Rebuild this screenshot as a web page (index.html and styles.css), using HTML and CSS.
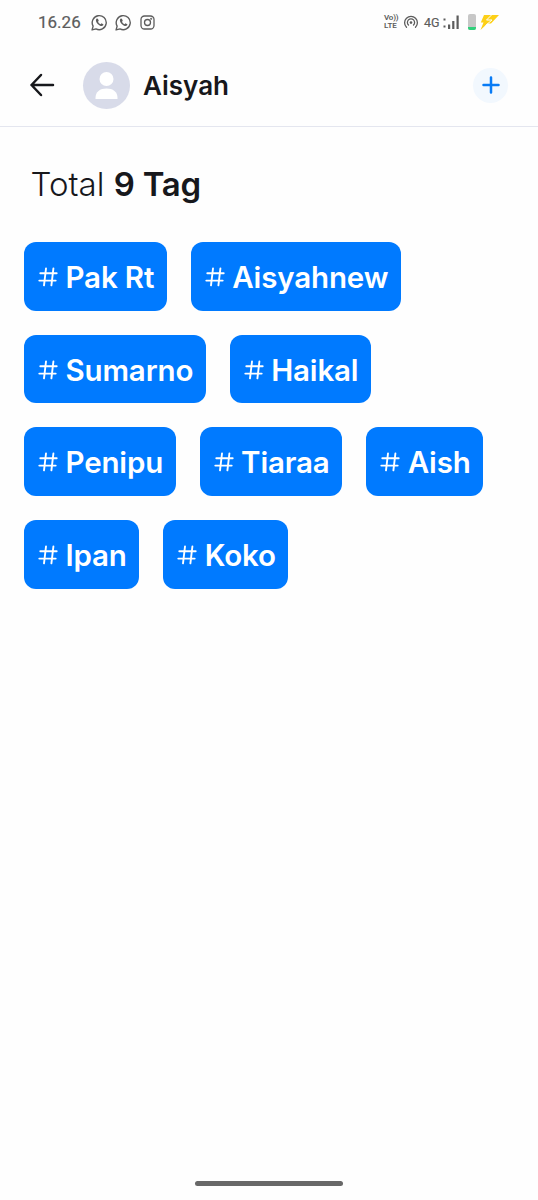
FILE: index.html
```html
<!DOCTYPE html>
<html lang="id">
<head>
    <meta charset="UTF-8">
    <meta name="viewport" content="width=device-width, initial-scale=1.0">
    <title>Aisyah - Tag</title>
    <link rel="stylesheet" href="styles.css">
</head>
<body>
    <svg class="sprite" width="0" height="0">
        <symbol id="icon-whatsapp" viewBox="0 0 16 16">
            <path d="M1 15l1-3.6A6.6 6.6 0 1 1 4.7 14z" fill="none" stroke="currentColor" stroke-width="1.3" stroke-linejoin="round"/>
            <path d="M5.2 4.5c-1.2 1-.6 3 1.1 4.8s4 2.6 5.1 1.4c.5-.7.3-1.1-.3-1.4l-1.2-.5-.9.8c-1.2-.5-1.9-1.2-2.4-2.3l.7-.9-.6-1.5c-.3-.6-.9-.8-1.500-.4z" fill="currentColor"/>
        </symbol>
        <symbol id="icon-hash" viewBox="0 0 20 20">
            <path d="M8 1.500L6 18.300M15.400 1.500L13.400 18.300M2.300 6.200h16.400M1.300 13.600h16.400" fill="none" stroke="currentColor" stroke-width="1.9" stroke-linecap="round"/>
        </symbol>
    </svg>

    <div class="status-bar">
        <div class="status-left">
            <span class="clock">16.26</span>
            <svg width="17" height="17"><use href="#icon-whatsapp"/></svg>
            <svg width="17" height="17"><use href="#icon-whatsapp"/></svg>
            <svg width="15" height="15" viewBox="0 0 15 15" fill="none" stroke="currentColor" stroke-width="1.3">
                <rect x="1" y="1" width="13" height="13" rx="3.5"/>
                <circle cx="7.5" cy="7.5" r="3"/>
                <circle cx="11.2" cy="3.8" r=".4"/>
            </svg>
        </div>
        <div class="status-right">
            <div class="volte"><span class="vo">Vo))</span><span>LTE</span></div>
            <svg class="hotspot" width="16" height="16" viewBox="0 0 16 16" fill="none" stroke="currentColor" stroke-width="1.3" stroke-linecap="round">
                <path d="M3.5 13.3a6.4 6.4 0 1 1 9 0M5.500 11a3.600 3.600 0 1 1 5 0"/>
                <circle cx="8" cy="8.6" r="1.3" fill="currentColor" stroke="none"/>
            </svg>
            <span class="network">4G</span>
            <svg class="signal" width="17" height="16" viewBox="0 0 17 16" fill="currentColor">
                <path d="M.5 4.500h2v2h-2zM.5 11.500h2v2h-2zM5 10.500h2.200V15H5zM9.200 7h2.200v8H9.200zM13.500 1.500h2.200V15h-2.200z"/>
            </svg>
            <div class="battery"><div class="battery-level"></div></div>
            <svg class="bolt" width="19" height="15" viewBox="0 0 19 15">
                <path d="M4 0h15l-8 8.500H7.500L.5 15 3.500 7.500H.8z" fill="#fdd017"/>
                <path d="M11.500 0L6.500 5H12L5.500 10.500" fill="none" stroke="#fefefe" stroke-width="1"/>
            </svg>
        </div>
    </div>

    <header>
        <button class="back-btn" aria-label="Kembali">
            <svg width="26" height="24" viewBox="0 0 26 24" fill="none" stroke="#17181c" stroke-width="2.5" stroke-linecap="round" stroke-linejoin="round">
                <path d="M24 12H2.5M12 2L2.500 12l9.500 10"/>
            </svg>
        </button>
        <div class="avatar">
            <svg width="47" height="47" viewBox="0 0 47 47" fill="#fff">
                <circle cx="23.5" cy="17" r="7"/>
                <path d="M12.5 37v-1c0-6.300 4.500-9.500 11-9.500s11 3.200 11 9.500v1z"/>
            </svg>
        </div>
        <h1>Aisyah</h1>
        <button class="add-btn" aria-label="Tambah tag">
            <svg width="18" height="18" viewBox="0 0 18 18" fill="none" stroke="#087bf5" stroke-width="2.5" stroke-linecap="round">
                <path d="M9 1.500v15M1.500 9h15"/>
            </svg>
        </button>
    </header>

    <main>
        <h2>Total <strong>9 Tag</strong></h2>
        <div class="tag-list">
            <div class="tag"><svg><use href="#icon-hash"/></svg>Pak Rt</div>
            <div class="tag"><svg><use href="#icon-hash"/></svg>Aisyahnew</div>
            <div class="tag"><svg><use href="#icon-hash"/></svg>Sumarno</div>
            <div class="tag"><svg><use href="#icon-hash"/></svg>Haikal</div>
            <div class="tag"><svg><use href="#icon-hash"/></svg>Penipu</div>
            <div class="tag"><svg><use href="#icon-hash"/></svg>Tiaraa</div>
            <div class="tag"><svg><use href="#icon-hash"/></svg>Aish</div>
            <div class="tag"><svg><use href="#icon-hash"/></svg>Ipan</div>
            <div class="tag"><svg><use href="#icon-hash"/></svg>Koko</div>
        </div>
    </main>

    <footer>
        <div class="home-indicator"></div>
    </footer>
</body>
</html>
```

FILE: styles.css
```css
* {
    margin: 0;
    padding: 0;
    box-sizing: border-box;
}

body {
    display: flex;
    flex-direction: column;
    height: 100vh;
    background: #fefefe;
    color: #17181c;
    font-family: Inter, "Liberation Sans", sans-serif;
}

button {
    border: none;
    background: none;
}

svg {
    display: block;
    flex-shrink: 0;
}

.sprite {
    position: absolute;
}

/* Status bar */
.status-bar {
    display: flex;
    justify-content: space-between;
    height: 44px;
    padding: 0 39px 0 38px;
    color: #5c5c5c;
    font-family: Roboto, sans-serif;
}

.status-left,
.status-right {
    display: flex;
    align-items: center;
}

.status-left {
    gap: 7.5px;
}

.clock {
    width: 45px;
    font-size: 17px;
    font-weight: 400;
    -webkit-text-stroke: 0.2px;
}

.volte {
    display: flex;
    flex-direction: column;
    width: 15px;
    font-size: 8px;
    font-weight: 600;
    line-height: 8px;
}

.vo {
    letter-spacing: -0.2px;
}

.hotspot {
    margin-left: 4px;
}

.network {
    width: 16px;
    margin-left: 5px;
    font-size: 12.5px;
    font-weight: 400;
    -webkit-text-stroke: 0.2px;
}

.signal {
    margin-left: 3px;
}

.battery {
    display: flex;
    align-items: flex-end;
    width: 8px;
    height: 16px;
    margin-left: 8px;
    border-radius: 2px;
    background: #c7c7c7;
    overflow: hidden;
}

.battery-level {
    width: 100%;
    height: 3px;
    background: #2fd07a;
}

.bolt {
    margin-left: 4px;
}

/* Header */
header {
    display: flex;
    align-items: center;
    height: 83px;
    padding: 0 30px 0 29px;
    border-bottom: 1px solid #e4e6ef;
}

.avatar {
    width: 47px;
    height: 47px;
    margin-left: 28px;
    border-radius: 50%;
    background: #d8dbe9;
}

h1 {
    flex: 1;
    margin-left: 13px;
    font-size: 26px;
    font-weight: 600;
}

.add-btn {
    display: flex;
    align-items: center;
    justify-content: center;
    width: 35px;
    height: 35px;
    border-radius: 50%;
    background: #f2f8fe;
}

/* Tags */
main {
    flex: 1;
    padding: 36px 24px 0;
}

h2 {
    margin: 0 0 36px 6.5px;
    font-size: 33px;
    font-weight: 300;
    line-height: 43px;
}

h2 strong {
    font-weight: 600;
    letter-spacing: -0.2px;
}

.tag-list {
    display: flex;
    flex-wrap: wrap;
    gap: 24px;
}

.tag {
    display: flex;
    align-items: center;
    height: 68.7px;
    padding: 1px 12.5px 0 14px;
    border-radius: 12px;
    background: #007aff;
    color: #fff;
    font-size: 29.5px;
    font-weight: 600;
    letter-spacing: -0.15px;
}

.tag svg {
    width: 20px;
    height: 20px;
    margin-right: 7.5px;
}

footer {
    display: flex;
    justify-content: center;
    padding-bottom: 14px;
}

.home-indicator {
    width: 148px;
    height: 5px;
    border-radius: 3px;
    background: #686868;
}
```
